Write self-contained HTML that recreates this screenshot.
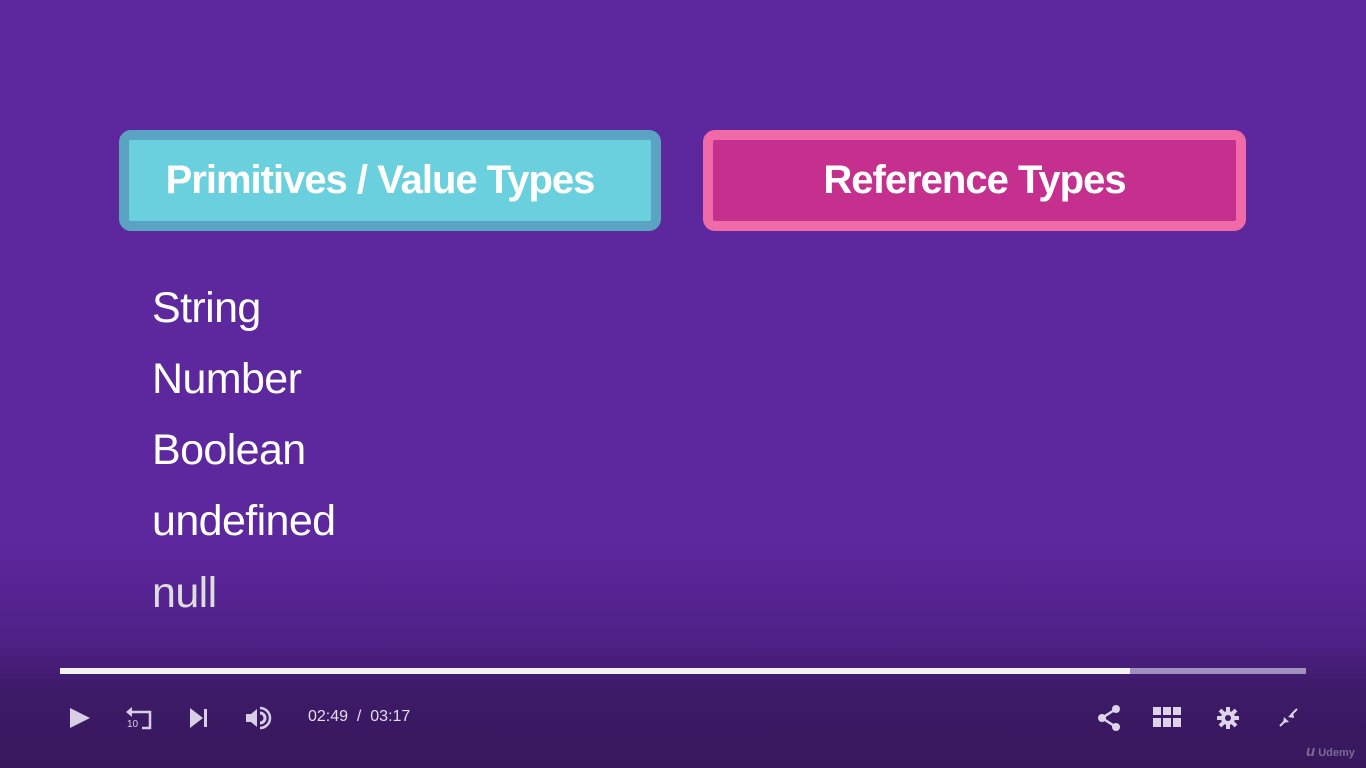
<!DOCTYPE html>
<html><head><meta charset="utf-8"><style>
*{margin:0;padding:0;box-sizing:border-box}
body{width:1366px;height:768px;overflow:hidden;position:relative;font-family:"Liberation Sans",sans-serif;
background:linear-gradient(to bottom,#5d279e 0px,#5d279e 540px,#4f2187 640px,#3d1a68 690px,#37185c 768px);}
.box{position:absolute;top:130px;height:101px;border-radius:12px;border:10px solid;color:#fff;font-weight:bold;font-size:40px;letter-spacing:-1px;text-align:center;line-height:81px}
.b1{left:119px;width:542px;background:#6bd0de;border-color:#5ba3c3;padding-right:20px}
.b2{left:703px;width:543px;background:#c5308f;border-color:#f06aa8}
.item{position:absolute;left:152px;color:#fff;font-size:43px;letter-spacing:-0.6px;line-height:50px}
.bar{position:absolute;top:668px;height:6px}
.ic{position:absolute}
.time{position:absolute;left:308px;top:708px;color:#e6ddf0;font-size:16px}
</style></head><body>
<div class="box b1">Primitives / Value Types</div>
<div class="box b2">Reference Types</div>
<div class="item" style="top:283px">String</div>
<div class="item" style="top:354px">Number</div>
<div class="item" style="top:425px">Boolean</div>
<div class="item" style="top:496px">undefined</div>
<div class="item" style="top:568px;color:#ddd">null</div>
<div class="bar" style="left:60px;width:1070px;background:#f2f2f2"></div>
<div class="bar" style="left:1130px;width:176px;background:#a090bd"></div>
<svg class="ic" style="left:60px;top:700px" width="380" height="40" fill="#d8cfe6">
<polygon points="10,8 30,18 10,28"/>
<path d="M72 12 h18 v16 h-8" stroke="#d8cfe6" stroke-width="2.5" fill="none"/>
<polygon points="66,12 72,7 72,17"/>
<text x="67" y="27" font-size="10" font-family="Liberation Sans">10</text>
<polygon points="130,8 143,18 130,28"/><rect x="144" y="9" width="3" height="18"/>
<polygon points="186,14 191,14 197,9 197,27 191,22 186,22"/>
<path d="M200 13 a5 5 0 0 1 0 10" stroke="#d8cfe6" stroke-width="3" fill="none"/>
<path d="M200 8 a10 10 0 0 1 0 20" stroke="#d8cfe6" stroke-width="2.5" fill="none"/>
</svg>
<div class="time">02:49 &nbsp;/ &nbsp;03:17</div>
<svg class="ic" style="left:1090px;top:700px" width="220" height="40" fill="#ddd4ea">
<circle cx="26" cy="9" r="4"/><circle cx="12" cy="18" r="4"/><circle cx="26" cy="27" r="4"/>
<path d="M26 9 L12 18 L26 27" stroke="#ddd4ea" stroke-width="2.5" fill="none"/>
<g><rect x="63" y="7" width="8" height="8"/><rect x="73" y="7" width="8" height="8"/><rect x="83" y="7" width="8" height="8"/>
<rect x="63" y="18" width="8" height="9"/><rect x="73" y="18" width="8" height="9"/><rect x="83" y="18" width="8" height="9"/></g>
<circle cx="138" cy="18" r="7"/>
<g stroke="#ddd4ea" stroke-width="4"><line x1="138" y1="7" x2="138" y2="29"/><line x1="127" y1="18" x2="149" y2="18"/><line x1="130" y1="10" x2="146" y2="26"/><line x1="146" y1="10" x2="130" y2="26"/></g>
<circle cx="138" cy="18" r="3" fill="#3d1a68"/>
<path d="M190 26 L196 20 M207 9 L201 15" stroke="#ddd4ea" stroke-width="2"/>
<polygon points="194,17 199,22 193,23"/><polygon points="203,12 198,17 204,18"/>
</svg>
<div style="position:absolute;left:1306px;top:743px;color:#7d6a97;font-size:11px;font-weight:bold"><span style="font-style:italic;font-size:15px">u</span> Udemy</div>
</body></html>
